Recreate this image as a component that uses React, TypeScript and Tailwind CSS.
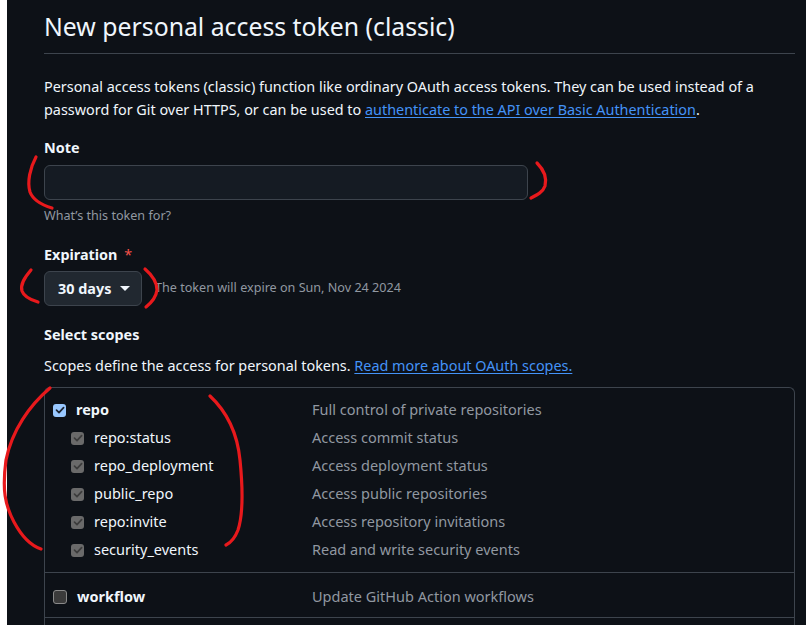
import React from 'react';

const font = { fontFamily: '"Noto Sans", "Liberation Sans", sans-serif' };

type Scope = { name: string; desc: string; sub?: boolean; checked: boolean };

const repoScopes: Scope[] = [
  { name: 'repo', desc: 'Full control of private repositories', checked: true },
  { name: 'repo:status', desc: 'Access commit status', sub: true, checked: true },
  { name: 'repo_deployment', desc: 'Access deployment status', sub: true, checked: true },
  { name: 'public_repo', desc: 'Access public repositories', sub: true, checked: true },
  { name: 'repo:invite', desc: 'Access repository invitations', sub: true, checked: true },
  { name: 'security_events', desc: 'Read and write security events', sub: true, checked: true },
];

function Check({ kind }: { kind: 'on' | 'disabled' | 'off' }) {
  if (kind === 'off') {
    return <span className="block h-[14px] w-[14px] rounded-[3px] border border-[#8a8a8a] bg-[#3b3b3b]" />;
  }
  const box = kind === 'on' ? 'bg-[#99c8ff]' : 'bg-[#6a6a6a]';
  const stroke = kind === 'on' ? '#1b2330' : '#3c3c3c';
  return (
    <span className={`flex h-[13px] w-[13px] items-center justify-center rounded-[3px] ${box}`}>
      <svg width="10" height="10" viewBox="0 0 10 10" fill="none">
        <path d="M1.5 5.2 L4 7.6 L8.6 2.6" stroke={stroke} strokeWidth="1.7" strokeLinecap="round" strokeLinejoin="round" />
      </svg>
    </span>
  );
}

function ScopeRow({ scope }: { scope: Scope }) {
  return (
    <div className="flex h-[28px] items-center">
      <div className={`flex w-[267px] items-center ${scope.sub ? 'pl-[26px]' : 'pl-[8px]'}`}>
        <Check kind={scope.checked ? (scope.sub ? 'disabled' : 'on') : 'off'} />
        <span className={`ml-[10px] text-[14.5px] text-[#f0f6fc] ${scope.sub ? '' : 'font-bold'}`}>{scope.name}</span>
      </div>
      <span className="text-[14.5px] text-[#9198a1]">{scope.desc}</span>
    </div>
  );
}

function Annotations() {
  return (
    <svg className="pointer-events-none absolute left-0 top-0" width="806" height="625" fill="none">
      <g stroke="#e8191c" strokeWidth="3.2" strokeLinecap="round" strokeLinejoin="round">
        <path d="M36 157 C30 168 27 182 30 192 C33 200 42 205 52 208" />
        <path d="M537 163 C544 170 547 178 545 186 C543 192 537 195 531 198" />
        <path d="M31 270 C25 277 20 284 22 291 C24 297 31 300 38 302" />
        <path d="M145 269 C152 275 157 283 157 290 C156 298 151 303 146 307" />
        <path d="M50 388 C30 405 12 430 6 460 C2 490 5 505 14 522 C22 537 32 546 41 549" />
        <path d="M210 396 C225 410 237 430 240 460 C243 490 243 515 238 530 C235 538 230 543 226 545" />
      </g>
    </svg>
  );
}

export default function App() {
  return (
    <div className="relative flex h-[625px] w-[806px] overflow-hidden bg-[#0d1117]" style={font}>
      <div className="w-[7px] shrink-0 bg-white" />
      <div className="w-[751px] shrink-0 pl-[37px] box-content">
        <h1 className="mt-[7px] border-b border-[#3d444d] pb-[8px] text-[24.8px] leading-[38px] text-[#f0f6fc]">
          New personal access token (classic)
        </h1>

        <p className="mt-[21px] text-[14.4px] leading-[23px] text-[#f0f6fc]">
          Personal access tokens (classic) function like ordinary OAuth access tokens. They can be used instead of a
          <br />
          password for Git over HTTPS, or can be used to{' '}
          <a className="text-[#4493f8] underline underline-offset-2">authenticate to the API over Basic Authentication</a>.
        </p>

        <div className="mt-[15px] text-[14.4px] font-bold leading-[23px] text-[#f0f6fc]">Note</div>
        <div className="mt-[6px] h-[35px] w-[484px] rounded-[6px] border border-[#3d444d] bg-[#151b23]" />
        <div className="mt-[6px] text-[12.6px] leading-[20px] text-[#9198a1]">What’s this token for?</div>

        <div className="mt-[17px] text-[14.4px] font-bold leading-[23px] text-[#f0f6fc]">
          Expiration <span className="ml-[3px] font-normal text-[#f85149]">*</span>
        </div>
        <div className="mt-[5px] flex items-center">
          <div className="flex h-[35px] w-[98px] items-center rounded-[6px] border border-[#3d444d] bg-[#212830] pl-[13px]">
            <span className="text-[14.4px] font-bold text-[#f0f6fc]">30 days</span>
            <svg className="ml-[9px]" width="10" height="6" viewBox="0 0 10 6">
              <path d="M0 0 L10 0 L5 5 Z" fill="#f0f6fc" />
            </svg>
          </div>
          <span className="ml-[13px] text-[12.6px] text-[#9198a1]">The token will expire on Sun, Nov 24 2024</span>
        </div>

        <div className="mt-[17px] text-[14.4px] font-bold leading-[23px] text-[#f0f6fc]">Select scopes</div>
        <p className="mt-[8px] text-[14.4px] leading-[23px] text-[#f0f6fc]">
          Scopes define the access for personal tokens.{' '}
          <a className="text-[#4493f8] underline underline-offset-2">Read more about OAuth scopes.</a>
        </p>

        <div className="mt-[10px] rounded-t-[6px] border border-b-0 border-[#3d444d]">
          <div className="border-b border-[#3d444d] pb-[8px] pt-[8px]">
            {repoScopes.map((s) => (
              <ScopeRow key={s.name} scope={s} />
            ))}
          </div>
          <div className="border-b border-[#3d444d] pb-[6px] pt-[10px]">
            <ScopeRow scope={{ name: 'workflow', desc: 'Update GitHub Action workflows', checked: false }} />
          </div>
          <div className="h-[40px]" />
        </div>
      </div>
      <Annotations />
    </div>
  );
}
